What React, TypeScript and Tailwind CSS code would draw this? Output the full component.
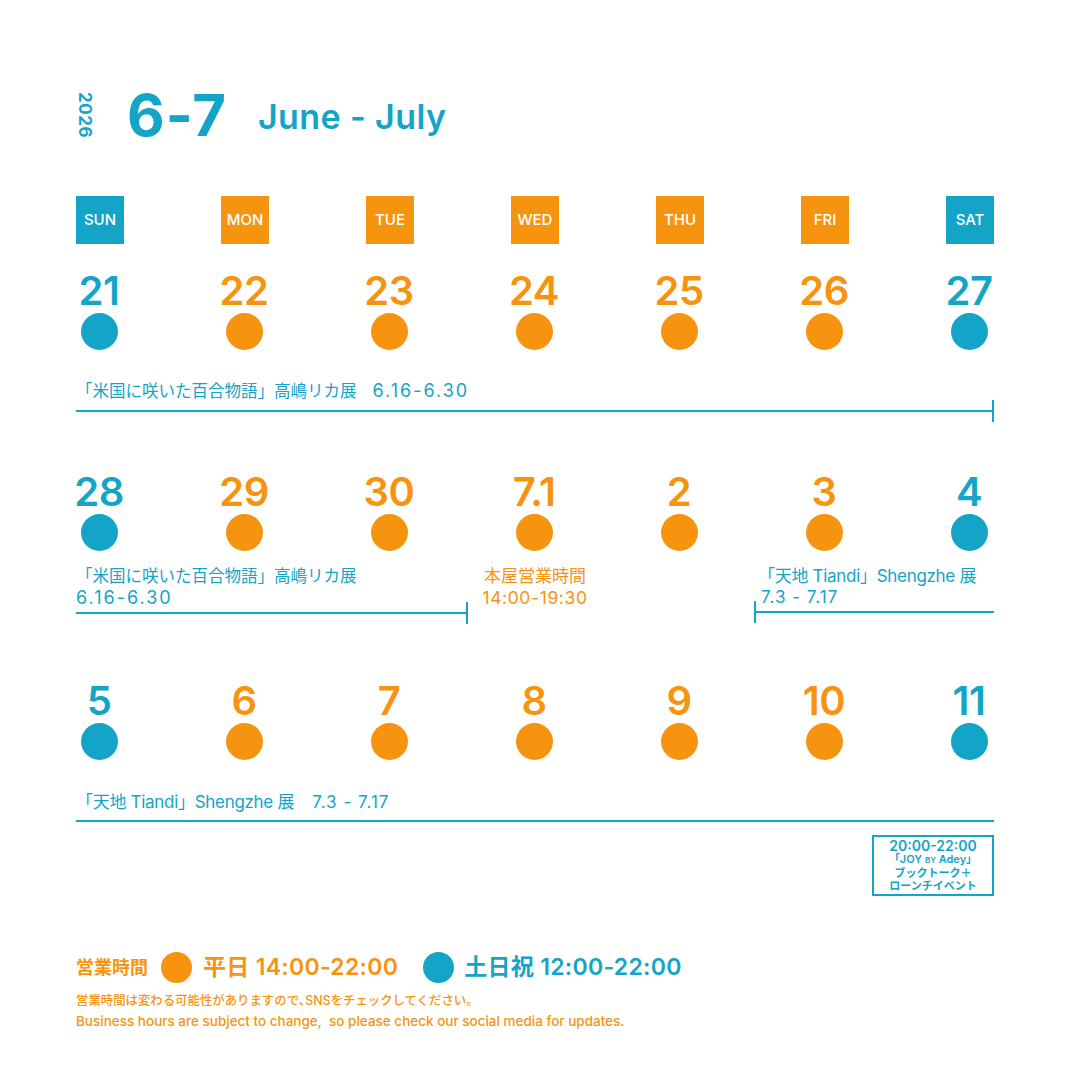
import React from 'react';

const BLUE = 'text-[#14a4c8]';
const ORANGE = 'text-[#f6940f]';

type Day = { n: string; blue: boolean };

const days = ['SUN', 'MON', 'TUE', 'WED', 'THU', 'FRI', 'SAT'];

const weeks: Day[][] = [
  ['21', '22', '23', '24', '25', '26', '27'],
  ['28', '29', '30', '7.1', '2', '3', '4'],
  ['5', '6', '7', '8', '9', '10', '11'],
].map(w => w.map((n, i) => ({ n, blue: i === 0 || i === 6 })));

const Grid: React.FC<{ children: React.ReactNode; className?: string }> = ({ children, className }) => (
  <div className={`grid grid-cols-[repeat(6,145px)_48px] ${className ?? ''}`}>{children}</div>
);

const WeekRow: React.FC<{ week: Day[]; className?: string }> = ({ week, className }) => (
  <Grid className={className}>
    {week.map(d => (
      <div key={d.n} className="w-[46px] flex flex-col items-center">
        <div
          className={`text-[40px] leading-[40px] font-semibold tracking-[-0.5px] whitespace-nowrap ${d.blue ? BLUE : ORANGE}`}
        >
          {d.n}
        </div>
        <div className={`mt-[2px] w-[37px] h-[37px] rounded-full ${d.blue ? 'bg-[#14a4c8]' : 'bg-[#f6940f]'}`} />
      </div>
    ))}
  </Grid>
);

// horizontal bar with optional end ticks
const Bar: React.FC<{ left?: boolean; right?: boolean }> = ({ left, right }) => (
  <div className="relative h-[2px] bg-[#14a4c8]">
    {left && <div className="absolute left-0 top-[-10px] w-[2px] h-[22px] bg-[#14a4c8]" />}
    {right && <div className="absolute right-0 top-[-10px] w-[2px] h-[22px] bg-[#14a4c8]" />}
  </div>
);

export default function App() {
  return (
    <div
      className="w-[1080px] h-[1080px] bg-white pl-[76px] pr-[86px] pt-[85px] flex flex-col"
      style={{ fontFamily: '"Inter", "Noto Sans CJK JP", sans-serif' }}
    >
      {/* title */}
      <div className="h-[60px] flex items-center">
        <div className={`[writing-mode:vertical-rl] text-[17px] leading-[17px] font-bold tracking-[0.5px] ${BLUE}`}>2026</div>
        <div className={`ml-[34px] text-[58px] leading-[60px] font-bold tracking-[1px] ${BLUE}`}>6-7</div>
        <div className={`ml-[31px] mt-[4px] text-[34px] leading-[40px] font-semibold tracking-[0.4px] ${BLUE}`}>June - July</div>
      </div>

      {/* weekday labels */}
      <Grid className="mt-[51px]">
        {days.map((d, i) => (
          <div
            key={d}
            className={`w-[48px] h-[48px] flex items-center justify-center text-white text-[15px] font-medium ${
              i === 0 || i === 6 ? 'bg-[#14a4c8]' : 'bg-[#f6940f]'
            }`}
          >
            {d}
          </div>
        ))}
      </Grid>

      {/* week 1 */}
      <WeekRow week={weeks[0]} className="mt-[27px]" />
      <div className={`mt-[30px] text-[16.5px] leading-[22px] ${BLUE}`}>
        「米国に咲いた百合物語」高嶋リカ展
        <span className="ml-[16px] text-[18px] tracking-[2px]">6.16-6.30</span>
      </div>
      <div className="mt-[8px]">
        <Bar right />
      </div>

      {/* week 2 */}
      <WeekRow week={weeks[1]} className="mt-[60px]" />
      <div className="mt-[15px] flex items-start">
        <div className="w-[392px]">
          <div className={`text-[16.5px] leading-[21px] ${BLUE}`}>
            「米国に咲いた百合物語」高嶋リカ展
            <br />
            <span className="text-[18px] tracking-[2px]">6.16-6.30</span>
          </div>
          <div className="mt-[3px]">
            <Bar right />
          </div>
        </div>
        <div className={`w-[134px] text-center text-[17px] leading-[21px] ${ORANGE}`}>
          本屋営業時間
          <br />
          <span className="text-[17.5px] tracking-[0.6px]">14:00-19:30</span>
        </div>
        <div className="ml-auto w-[240px]">
          <div className={`pl-[4px] text-[17px] leading-[21px] tracking-[-0.3px] ${BLUE}`}>
            「天地 Tiandi」Shengzhe 展
            <br />
            <span className="pl-[3px] tracking-[1px]">7.3 - 7.17</span>
          </div>
          <div className="mt-[3px]">
            <Bar left />
          </div>
        </div>
      </div>

      {/* week 3 */}
      <WeekRow week={weeks[2]} className="mt-[67px]" />
      <div className={`mt-[31px] text-[17px] leading-[22px] tracking-[-0.3px] ${BLUE}`}>
        「天地 Tiandi」Shengzhe 展<span className="ml-[18px] tracking-[1px]">7.3 - 7.17</span>
      </div>
      <div className="mt-[7px]">
        <Bar />
      </div>
      <div className="mt-[13px] self-end w-[122px] h-[61px] border-2 border-[#14a4c8] flex flex-col items-center justify-center">
        <div className={`text-[14px] leading-[15px] font-semibold ${BLUE}`}>20:00-22:00</div>
        <div className={`text-[11px] leading-[13px] font-semibold ${BLUE}`}>
          「JOY <span className="text-[8px]">BY</span> Adey」
        </div>
        <div className={`text-[11px] leading-[13px] font-semibold ${BLUE}`}>ブックトーク＋</div>
        <div className={`text-[11px] leading-[13px] font-semibold ${BLUE}`}>ローンチイベント</div>
      </div>

      {/* legend */}
      <div className="mt-[54px] h-[34px] flex items-center">
        <div className={`text-[18px] font-bold ${ORANGE}`}>営業時間</div>
        <div className="ml-[13px] w-[31px] h-[31px] rounded-full bg-[#f6940f]" />
        <div className={`ml-[11px] text-[23px] font-semibold tracking-[0.3px] ${ORANGE}`}>平日 14:00-22:00</div>
        <div className="ml-[25px] w-[31px] h-[31px] rounded-full bg-[#14a4c8]" />
        <div className={`ml-[10px] text-[23px] font-semibold tracking-[0.3px] ${BLUE}`}>土日祝 12:00-22:00</div>
      </div>
      <div className={`mt-[6px] text-[12.4px] leading-[21px] font-medium ${ORANGE}`}>
        営業時間は変わる可能性がありますので､SNSをチェックしてください。
      </div>
      <div className={`text-[13.5px] leading-[21px] font-medium ${ORANGE}`}>
        Business hours are subject to change,&nbsp; so please check our social media for updates.
      </div>
    </div>
  );
}
